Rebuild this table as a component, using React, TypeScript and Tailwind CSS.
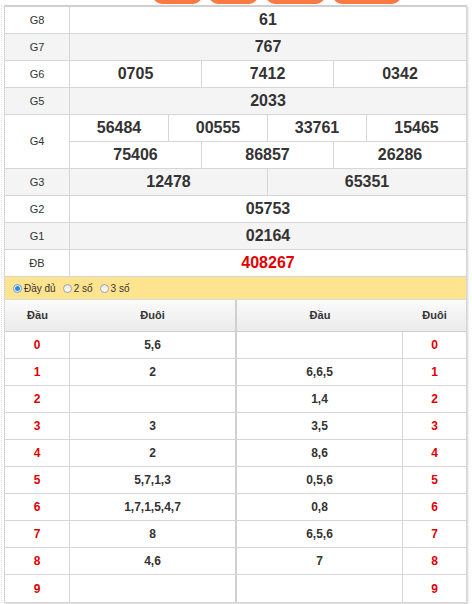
import React from "react";

type Prize = { label: string; lines: string[][]; shaded: boolean; red?: boolean };

const prizes: Prize[] = [
  { label: "G8", lines: [["61"]], shaded: false },
  { label: "G7", lines: [["767"]], shaded: true },
  { label: "G6", lines: [["0705", "7412", "0342"]], shaded: false },
  { label: "G5", lines: [["2033"]], shaded: true },
  {
    label: "G4",
    lines: [
      ["56484", "00555", "33761", "15465"],
      ["75406", "86857", "26286"],
    ],
    shaded: false,
  },
  { label: "G3", lines: [["12478", "65351"]], shaded: true },
  { label: "G2", lines: [["05753"]], shaded: false },
  { label: "G1", lines: [["02164"]], shaded: true },
  { label: "ĐB", lines: [["408267"]], shaded: false, red: true },
];

const cols: Record<number, string> = {
  1: "grid-cols-1",
  2: "grid-cols-2",
  3: "grid-cols-3",
  4: "grid-cols-4",
};

// đầu / đuôi rows: [digit, đuôi of đầu, đầu of đuôi]
const loto: [string, string, string][] = [
  ["0", "5,6", ""],
  ["1", "2", "6,6,5"],
  ["2", "", "1,4"],
  ["3", "3", "3,5"],
  ["4", "2", "8,6"],
  ["5", "5,7,1,3", "0,5,6"],
  ["6", "1,7,1,5,4,7", "0,8"],
  ["7", "8", "6,5,6"],
  ["8", "4,6", "7"],
  ["9", "", ""],
];

const pills = [
  { w: "w-[49px]", ml: "ml-[153px]" },
  { w: "w-[49px]", ml: "ml-[7px]" },
  { w: "w-[59px]", ml: "ml-[8px]" },
  { w: "w-[68px]", ml: "ml-[8px]" },
];

function Radio({ checked, label }: { checked?: boolean; label: string }) {
  return (
    <label className="flex items-center gap-[2px]">
      {checked ? (
        <span className="flex h-[9px] w-[9px] items-center justify-center rounded-full border border-[#5b9ad8] bg-white">
          <span className="h-[5px] w-[5px] rounded-full bg-[#2f86dc]" />
        </span>
      ) : (
        <span className="h-[9px] w-[9px] rounded-full border border-[#a3a3a3] bg-gradient-to-b from-[#e6e6e6] to-white" />
      )}
      <span>{label}</span>
    </label>
  );
}

export default function App() {
  return (
    <div className="h-[604px] w-[472px] overflow-hidden bg-white font-['Liberation_Sans',Arial,sans-serif] text-[#333]">
      {/* tab buttons, only their bottom edge shows */}
      <div className="flex h-[5px] items-end overflow-hidden pb-[1px]">
        {pills.map((p, i) => (
          <div key={i} className={`${p.ml} ${p.w} h-[30px] shrink-0 rounded-[9px] bg-[#fb7a44]`} />
        ))}
      </div>

      <div className="ml-[1px] border-l border-dotted border-[#e2e2e2] pl-[2px]">
        <div className="w-[463px] border-x border-t-2 border-b border-x-[#d6d6d6] border-t-[#cfcfcf] border-b-[#d6d6d6] shadow-[1px_1px_2px_rgba(0,0,0,0.18)]">
          {/* Prize table */}
          {prizes.map((p) => (
            <div
              key={p.label}
              className={`flex border-b border-[#d6d6d6] ${p.shaded ? "bg-[#f4f4f4]" : "bg-white"}`}
            >
              <div className="flex w-[65px] shrink-0 items-center justify-center border-r border-[#d6d6d6] text-[11px]">
                {p.label}
              </div>
              <div className="flex flex-1 flex-col">
                {p.lines.map((line, li) => (
                  <div
                    key={li}
                    className={`grid h-[26px] ${cols[line.length]} ${li > 0 ? "box-content border-t border-[#d6d6d6]" : ""}`}
                  >
                    {line.map((v, vi) => (
                      <div
                        key={vi}
                        className={`flex items-center justify-center text-[16px] font-bold ${
                          vi < line.length - 1 ? "border-r border-[#d6d6d6]" : ""
                        } ${p.red ? "text-[#e00000]" : ""}`}
                      >
                        {v}
                      </div>
                    ))}
                  </div>
                ))}
              </div>
            </div>
          ))}

          {/* Radio bar */}
          <div className="flex h-[22px] items-center gap-[7px] bg-[#ffe48f] pl-[8px] text-[10px]">
            <Radio checked label="Đầy đủ" />
            <Radio label="2 số" />
            <Radio label="3 số" />
          </div>

          {/* Header */}
          <div className="flex h-[33px] border-t border-b border-t-[#dcdcdc] border-b-[#cfcfcf] border-b-dotted bg-gradient-to-b from-[#fbfbfb] to-[#ebebeb] text-[11px] font-bold">
            <div className="flex w-[65px] items-center justify-center">Đầu</div>
            <div className="flex w-[167px] items-center justify-center border-r-2 border-[#d0d0d0]">Đuôi</div>
            <div className="flex w-[166px] items-center justify-center">Đầu</div>
            <div className="flex flex-1 items-center justify-center">Đuôi</div>
          </div>

          {/* Loto rows */}
          {loto.map(([d, tail, head], i) => (
            <div
              key={d}
              className={`flex h-[27px] text-[12px] font-bold ${i < loto.length - 1 ? "border-b border-[#d6d6d6]" : "h-[26px]"}`}
            >
              <div className="flex w-[65px] items-center justify-center border-r border-[#d6d6d6] text-[#e00000]">
                {d}
              </div>
              <div className="flex w-[167px] items-center justify-center border-r-2 border-[#d0d0d0]">
                {tail}
              </div>
              <div className="flex w-[166px] items-center justify-center border-r border-[#d6d6d6]">
                {head}
              </div>
              <div className="flex flex-1 items-center justify-center text-[#e00000]">{d}</div>
            </div>
          ))}
        </div>
      </div>
    </div>
  );
}
